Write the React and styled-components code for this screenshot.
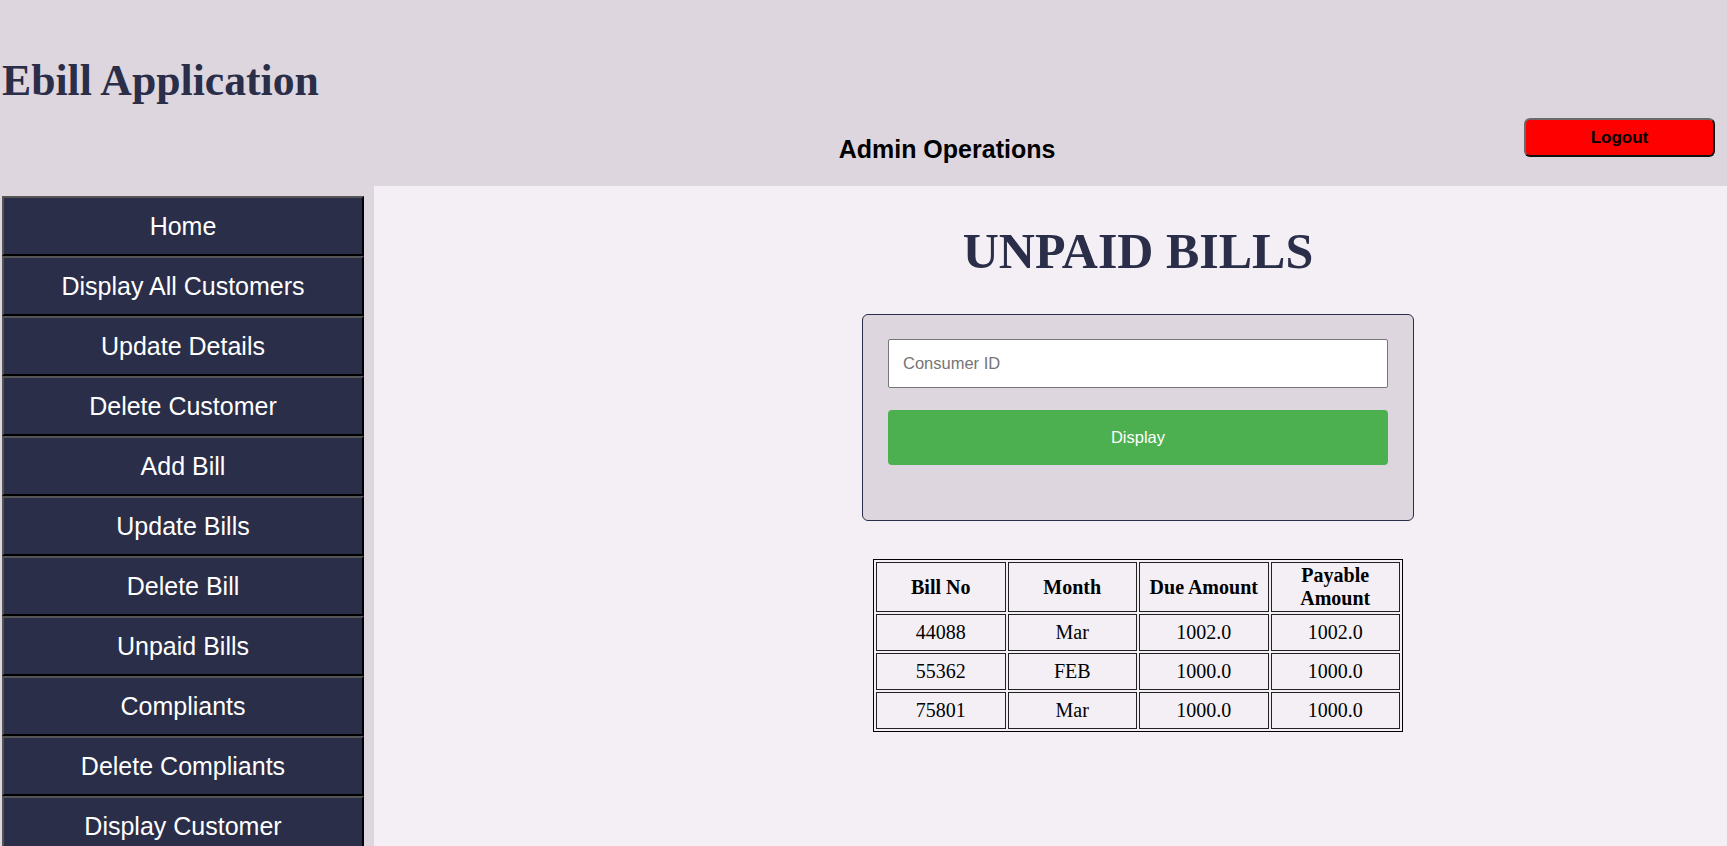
import React from "react";
import styled, { createGlobalStyle } from "styled-components";

const GlobalStyle = createGlobalStyle`
  html, body {
    margin: 0;
    padding: 0;
    background: #ddd6de;
    font-family: "Liberation Serif", "Times New Roman", serif;
  }
  * { box-sizing: border-box; }
`;

const Page = styled.div`
  height: 100vh;
  overflow: hidden;
  display: flex;
  flex-direction: column;
`;

const Header = styled.header`
  height: 186px;
  flex: none;
  display: flex;
  flex-direction: column;
  padding: 0 12px 0 2px;
`;

const AppTitle = styled.h1`
  margin: 55px 0 0;
  font-family: "Liberation Serif", "Times New Roman", serif;
  font-weight: 700;
  font-size: 43.7px;
  line-height: 50px;
  color: #2a2e48;
`;

const SubRow = styled.div`
  margin-top: 13px;
  display: flex;
  align-items: flex-start;
`;

const SectionLabel = styled.h3`
  flex: 1;
  margin: 17px 0 0;
  padding-left: 368px;
  text-align: center;
  font-family: "Liberation Sans", Arial, sans-serif;
  font-weight: 700;
  font-size: 25px;
  color: #000;
`;

const LogoutButton = styled.button`
  width: 191px;
  height: 39px;
  background: #ff0000;
  color: #000;
  border: 2px solid;
  border-color: #6a6a6a #111 #111 #6a6a6a;
  border-radius: 6px;
  font-family: "Liberation Sans", Arial, sans-serif;
  font-weight: 700;
  font-size: 17px;
  cursor: pointer;
`;

const Body = styled.div`
  flex: 1;
  display: flex;
  min-height: 0;
`;

const Sidebar = styled.nav`
  width: 362px;
  flex: none;
  margin: 10px 10px 0 2px;
  display: flex;
  flex-direction: column;
`;

const NavItem = styled.a`
  height: 60px;
  flex: none;
  display: flex;
  align-items: center;
  justify-content: center;
  padding-top: 1px;
  background: #2a2e48;
  color: #fff;
  border: 2px solid;
  border-color: #555 #000 #000 #555;
  font-family: "Liberation Sans", Arial, sans-serif;
  font-size: 25px;
  text-decoration: none;
  cursor: pointer;
`;

const Main = styled.main`
  flex: 1;
  background: #f3eff5;
  display: flex;
  flex-direction: column;
  align-items: center;
  padding-left: 175px;
`;

const PageTitle = styled.h1`
  margin: 36px 0 0;
  font-family: "Liberation Serif", "Times New Roman", serif;
  font-weight: 700;
  font-size: 50px;
  line-height: 58px;
  color: #2a2e48;
`;

const FormBox = styled.form`
  margin-top: 34px;
  width: 552px;
  background: #ddd6de;
  border: 1px solid #2a2e48;
  border-radius: 6px;
  padding: 24px 25px 55px;
  display: flex;
  flex-direction: column;
`;

const TextInput = styled.input`
  height: 49px;
  width: 100%;
  padding: 0 14px;
  border: 1px solid #767676;
  border-radius: 2px;
  background: #fff;
  font-family: "Liberation Sans", Arial, sans-serif;
  font-size: 16.5px;
  &::placeholder { color: #757575; }
`;

const SubmitButton = styled.button`
  margin-top: 22px;
  height: 55px;
  width: 100%;
  background: #4caf50;
  color: #fff;
  border: none;
  border-radius: 4px;
  font-family: "Liberation Sans", Arial, sans-serif;
  font-size: 16.5px;
  cursor: pointer;
`;

const BillTable = styled.table`
  margin-top: 38px;
  width: 530px;
  table-layout: fixed;
  border: 1px solid #000;
  border-spacing: 2px;
  font-family: "Liberation Serif", "Times New Roman", serif;
  font-size: 20px;
  color: #000;
`;

const HeadCell = styled.th`
  border: 1px solid #222;
  padding: 1px;
  font-weight: 700;
  text-align: center;
  line-height: 23px;
`;

const Cell = styled.td`
  border: 1px solid #222;
  padding: 6px 1px;
  text-align: center;
  line-height: 23px;
`;

const navItems = [
  "Home",
  "Display All Customers",
  "Update Details",
  "Delete Customer",
  "Add Bill",
  "Update Bills",
  "Delete Bill",
  "Unpaid Bills",
  "Compliants",
  "Delete Compliants",
  "Display Customer",
];

const bills = [
  { no: "44088", month: "Mar", due: "1002.0", pay: "1002.0" },
  { no: "55362", month: "FEB", due: "1000.0", pay: "1000.0" },
  { no: "75801", month: "Mar", due: "1000.0", pay: "1000.0" },
];

export default function App() {
  return (
    <>
      <GlobalStyle />
      <Page>
        <Header>
          <AppTitle>Ebill Application</AppTitle>
          <SubRow>
            <SectionLabel>Admin Operations</SectionLabel>
            <LogoutButton type="button">Logout</LogoutButton>
          </SubRow>
        </Header>
        <Body>
          <Sidebar>
            {navItems.map((item) => (
              <NavItem key={item}>{item}</NavItem>
            ))}
          </Sidebar>
          <Main>
            <PageTitle>UNPAID BILLS</PageTitle>
            <FormBox onSubmit={(e) => e.preventDefault()}>
              <TextInput type="text" placeholder="Consumer ID" />
              <SubmitButton type="submit">Display</SubmitButton>
            </FormBox>
            <BillTable>
              <thead>
                <tr>
                  <HeadCell>Bill No</HeadCell>
                  <HeadCell>Month</HeadCell>
                  <HeadCell>Due Amount</HeadCell>
                  <HeadCell>Payable Amount</HeadCell>
                </tr>
              </thead>
              <tbody>
                {bills.map((b) => (
                  <tr key={b.no}>
                    <Cell>{b.no}</Cell>
                    <Cell>{b.month}</Cell>
                    <Cell>{b.due}</Cell>
                    <Cell>{b.pay}</Cell>
                  </tr>
                ))}
              </tbody>
            </BillTable>
          </Main>
        </Body>
      </Page>
    </>
  );
}
